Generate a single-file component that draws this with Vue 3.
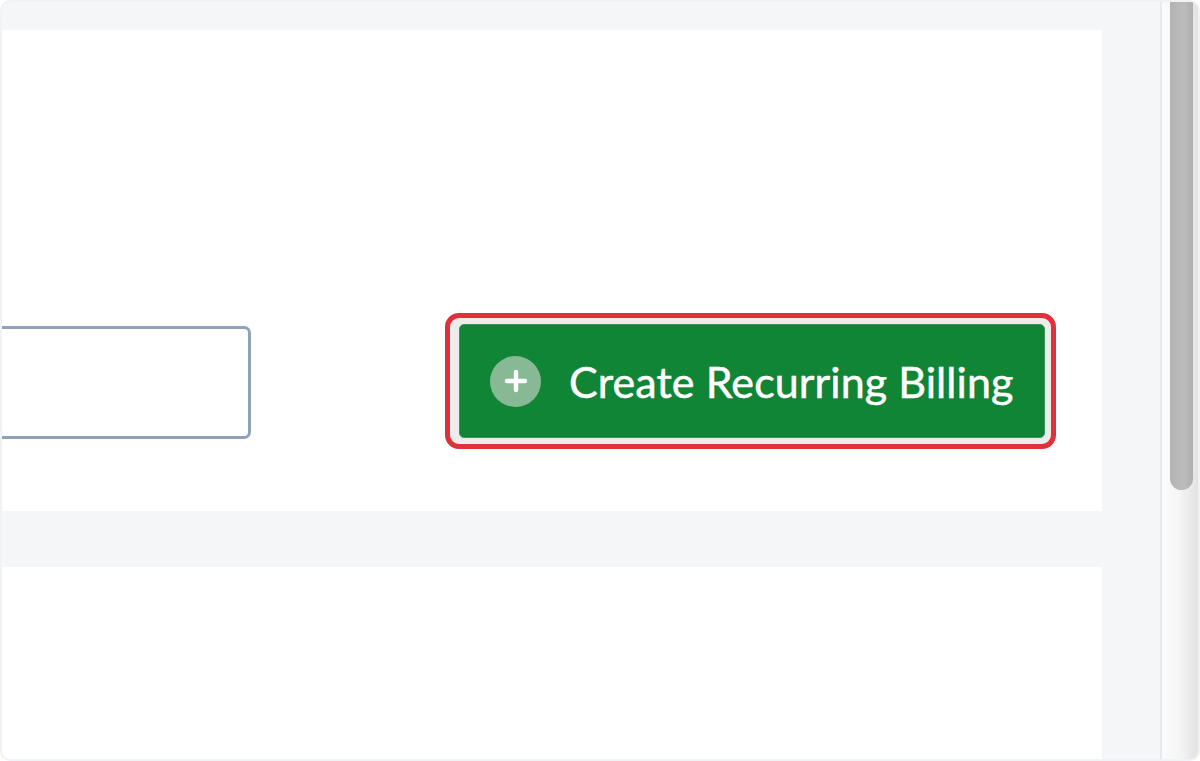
<script setup>
const label = 'Create Recurring Billing'
</script>

<template>
  <div class="frame">
    <main class="content">
      <section class="panel">
        <div class="field"></div>
        <div class="highlight">
          <button class="create" type="button">
            <span class="plus">
              <svg width="24" height="24" viewBox="0 0 24 24" aria-hidden="true">
                <path d="M12 3v18M3 12h18" stroke="#fff" stroke-width="4.4" stroke-linecap="round" fill="none" />
              </svg>
            </span>
            <span class="label">{{ label }}</span>
          </button>
        </div>
      </section>
      <section class="panel lower"></section>
    </main>
    <aside class="scrollbar">
      <div class="thumb"></div>
    </aside>
  </div>
</template>

<style>
html, body { margin: 0; background: #fff; }
</style>

<style scoped>
.frame {
  box-sizing: border-box;
  width: 1200px;
  height: 761px;
  display: flex;
  overflow: hidden;
  background: #f5f6f8;
  border: 2px solid #f1f2f5;
  border-radius: 10px;
  font-family: Lato, "Noto Sans", sans-serif;
}
.content {
  box-sizing: border-box;
  width: 1160px;
  flex: none;
  padding-top: 28px;
  border-right: 2px solid #e8e9eb;
}
.panel {
  box-sizing: border-box;
  width: 1100px;
  height: 481px;
  background: #fff;
  display: flex;
  align-items: flex-start;
  padding-top: 283px;
}
.lower {
  height: 300px;
  margin-top: 56px;
  padding: 0;
}
.field {
  box-sizing: border-box;
  width: 249px;
  height: 113px;
  margin-top: 13px;
  border: 3px solid #8fa2ba;
  border-left: 0;
  border-radius: 0 7px 7px 0;
  background: #fff;
}
.highlight {
  box-sizing: border-box;
  width: 611px;
  height: 136px;
  margin-left: 194px;
  padding: 6px 6px 6px 9px;
  border: 5px solid #e0313a;
  border-radius: 14px;
  background: #ececec;
  display: flex;
}
.create {
  flex: 1;
  display: flex;
  align-items: center;
  gap: 29px;
  padding: 0 0 0 30px;
  border: 1px solid #3f8f58;
  border-radius: 5px;
  background: #118536;
  color: #fff;
  font: inherit;
}
.plus {
  width: 51px;
  height: 51px;
  flex: none;
  display: flex;
  align-items: center;
  justify-content: center;
  border-radius: 50%;
  background: #88b995;
}
.label {
  font-size: 43px;
  line-height: 1;
  white-space: nowrap;
  margin-left: -1px;
  letter-spacing: 0.08px;
  -webkit-text-stroke: 0.5px #fff;
}
.scrollbar {
  flex: 1;
  position: relative;
  background: linear-gradient(90deg, #fbfbfb 0%, #f6f6f6 45%, #e2e2e2 100%);
}
.thumb {
  width: 23px;
  height: 488px;
  margin-left: 8px;
  border-radius: 0 0 12px 12px;
  background: linear-gradient(90deg, #b4b4b4, #bcbcbc 60%, #aeaeae);
}
</style>
